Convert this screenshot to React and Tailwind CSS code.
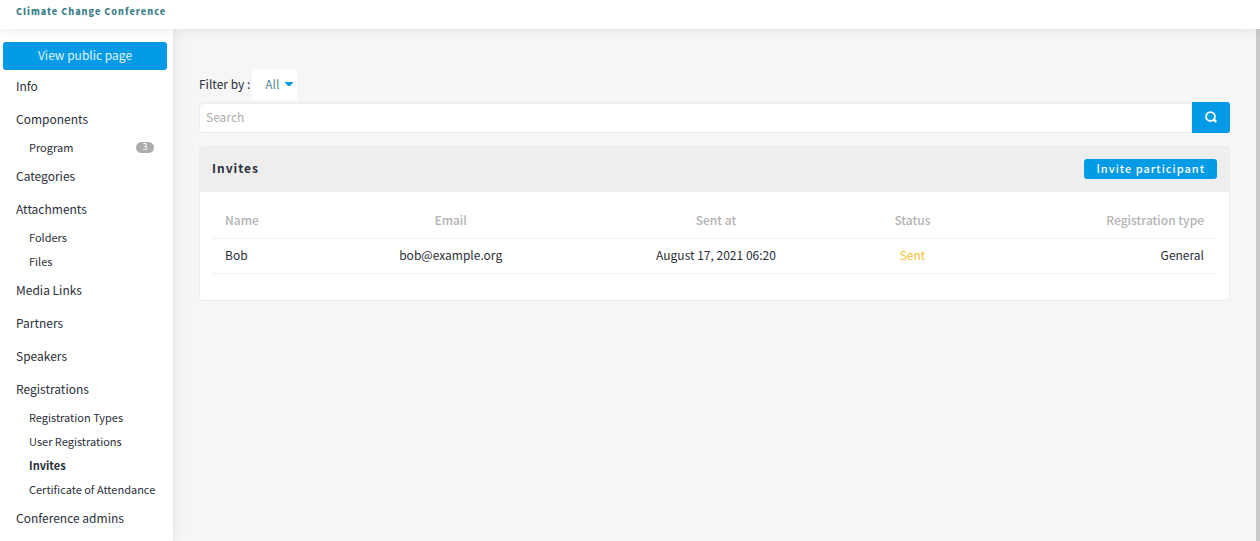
import React from 'react';

const menu = [
  { label: 'Info' },
  { label: 'Components', children: [{ label: 'Program', count: 3 }] },
  { label: 'Categories' },
  { label: 'Attachments', children: [{ label: 'Folders' }, { label: 'Files' }] },
  { label: 'Media Links' },
  { label: 'Partners' },
  { label: 'Speakers' },
  {
    label: 'Registrations',
    children: [
      { label: 'Registration Types' },
      { label: 'User Registrations' },
      { label: 'Invites', active: true },
      { label: 'Certificate of Attendance' },
    ],
  },
  { label: 'Conference admins' },
];

const invites = [
  {
    name: 'Bob',
    email: 'bob@example.org',
    sentAt: 'August 17, 2021 06:20',
    status: 'Sent',
    type: 'General',
  },
];

const SubItem = ({ item }) => (
  <li>
    <a
      href="#"
      className={
        item.active
          ? 'flex h-6 items-center justify-between whitespace-nowrap pb-[2px] pl-[29px] pr-[19px] text-[11px] font-bold'
          : 'flex h-6 items-center justify-between whitespace-nowrap pb-[2px] pl-[29px] pr-[19px] text-[11px]'
      }
    >
      {item.label}
      {item.count && (
        <span className="flex h-[11px] w-[18px] items-center justify-center rounded-full bg-[#adadad] text-[9px] text-white">
          {item.count}
        </span>
      )}
    </a>
  </li>
);

const Sidebar = () => (
  <aside className="z-10 w-[173px] shrink-0 bg-white pt-[13px] shadow-[0_0_13px_rgba(10,10,10,0.1)]">
    <a
      href="#"
      className="ml-[3px] mr-[6px] flex h-7 items-center justify-center rounded-[3px] bg-[#039be5] pb-[2px] text-[12px] text-[#e0f3fc]"
    >
      View public page
    </a>
    <ul>
      {menu.map((item) => (
        <li key={item.label}>
          <a href="#" className="flex h-[33px] items-center px-4 pb-[2px] text-[12px]">
            {item.label}
          </a>
          {item.children && (
            <ul>
              {item.children.map((child) => (
                <SubItem key={child.label} item={child} />
              ))}
            </ul>
          )}
        </li>
      ))}
    </ul>
  </aside>
);

const Filter = () => (
  <div className="flex h-[31px] items-center gap-[2px]">
    <label htmlFor="filter" className="pb-[2px]">
      Filter by :
    </label>
    <div className="relative h-full">
      <select
        id="filter"
        className="h-full w-[45px] appearance-none bg-white pb-[2px] pl-[13px] text-[#4f8c96]"
      >
        <option>All</option>
      </select>
      <svg
        viewBox="0 0 8 4"
        className="pointer-events-none absolute right-1 top-[13px] h-1 w-2 fill-[#039be5]"
      >
        <path d="M0 0h8v.6L5 4H3L0 .6z" />
      </svg>
    </div>
  </div>
);

const Search = () => (
  <form className="mt-[2px] flex h-[31px]">
    <input
      type="text"
      aria-label="Search"
      placeholder="Search"
      className="min-w-0 flex-1 rounded-l-[4px] border border-[#ececec] bg-white px-[6px] pb-[2px] shadow-[inset_0_1px_1px_#eeeeee] placeholder:text-[#adadad]"
    />
    <button
      type="button"
      aria-label="Submit search"
      className="flex w-[38px] items-center justify-center rounded-r-[3px] bg-[#039be5] pb-[2px]"
    >
      <svg viewBox="0 0 12 12" className="h-3 w-3" fill="none" stroke="#fff">
        <circle cx="5.5" cy="5.5" r="4.4" strokeWidth="1.8" />
        <path d="M8.8 8.8l1.6 1.4" strokeWidth="2.6" strokeLinecap="round" />
      </svg>
    </button>
  </form>
);

const InvitesTable = () => (
  <table className="w-full table-fixed border-collapse text-center">
    <thead>
      <tr className="h-9 border-b border-[#f0f0f0] text-[#b3b3b3]">
        <th className="w-[12.4%] px-[13px] text-left font-medium">Name</th>
        <th className="w-[22.7%] font-medium">Email</th>
        <th className="w-[30.1%] font-medium">Sent at</th>
        <th className="w-[9%] font-medium">Status</th>
        <th className="px-[13px] text-right font-medium">Registration type</th>
      </tr>
    </thead>
    <tbody>
      {invites.map((invite) => (
        <tr key={invite.email} className="h-[35px] border-b border-[#f0f0f0]">
          <td className="px-[13px] pb-[2px] text-left">{invite.name}</td>
          <td className="pb-[2px]">{invite.email}</td>
          <td className="pb-[2px]">{invite.sentAt}</td>
          <td className="pb-[2px] text-[#fbc02d]">{invite.status}</td>
          <td className="px-[13px] pb-[2px] text-right">{invite.type}</td>
        </tr>
      ))}
    </tbody>
  </table>
);

export default function App() {
  return (
    <div className="flex h-screen flex-col overflow-hidden bg-[#f6f6f6] font-['Noto_Sans_CJK_SC','Source_Sans_Pro',sans-serif] text-[12px] leading-4 text-[#2b2f3a]">
      <header className="z-20 flex h-[29px] shrink-0 bg-white px-4 pt-1 shadow-[0_0_13px_rgba(10,10,10,0.1)]">
        <a href="#" className="text-[9px] font-black tracking-[1px] text-[#3b7f8a]">
          Climate Change Conference
        </a>
      </header>
      <div className="flex min-h-0 flex-1">
        <Sidebar />
        <main className="min-w-0 flex-1 border-r-4 border-[#cbcbcb] px-[26px] pt-10">
          <Filter />
          <Search />
          <section className="mt-[13px] rounded-[4px] border border-[#ececec] bg-white">
            <div className="flex h-[45px] items-center justify-between bg-[#eeeeee] px-3 pb-[2px]">
              <h1 className="pb-[2px] text-[12px] font-bold tracking-[1px]">Invites</h1>
              <button
                type="button"
                className="h-5 rounded-[3px] bg-[#039be5] px-3 pb-[2px] text-[11px] font-medium tracking-[1px] text-white"
              >
                Invite participant
              </button>
            </div>
            <div className="px-3 pb-[26px] pt-[10px]">
              <InvitesTable />
            </div>
          </section>
        </main>
      </div>
    </div>
  );
}
